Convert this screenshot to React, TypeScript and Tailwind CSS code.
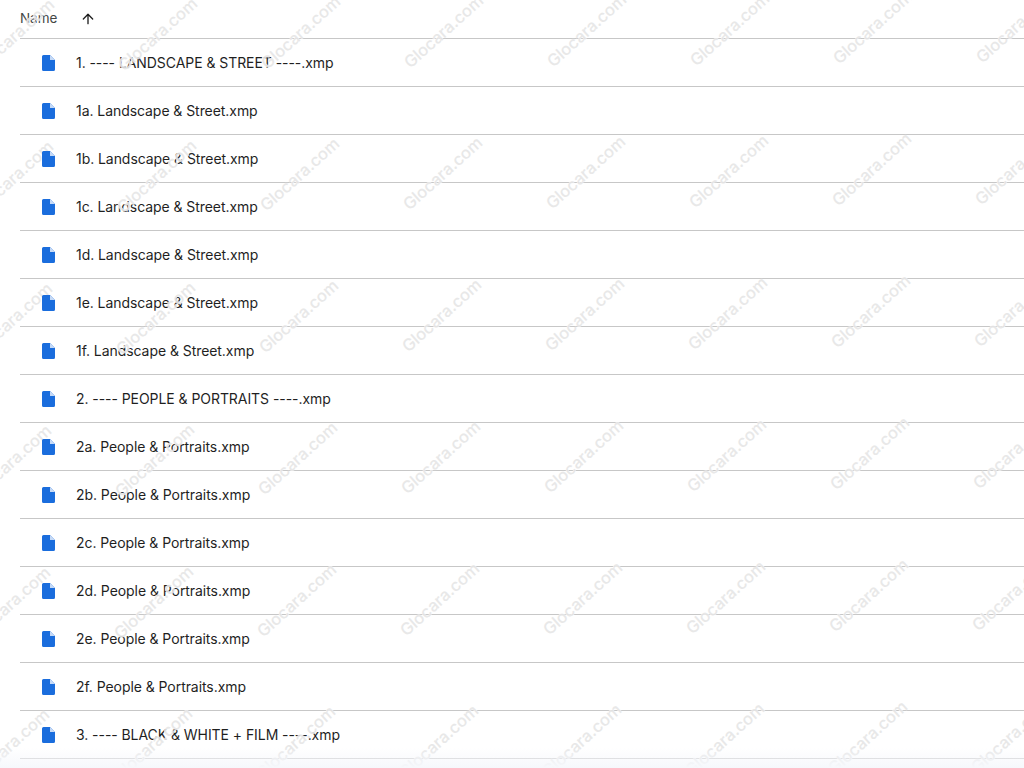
import { ArrowUp } from "lucide-react";

const files = [
  "1. ---- LANDSCAPE & STREET ----.xmp",
  "1a. Landscape & Street.xmp",
  "1b. Landscape & Street.xmp",
  "1c. Landscape & Street.xmp",
  "1d. Landscape & Street.xmp",
  "1e. Landscape & Street.xmp",
  "1f. Landscape & Street.xmp",
  "2. ---- PEOPLE & PORTRAITS ----.xmp",
  "2a. People & Portraits.xmp",
  "2b. People & Portraits.xmp",
  "2c. People & Portraits.xmp",
  "2d. People & Portraits.xmp",
  "2e. People & Portraits.xmp",
  "2f. People & Portraits.xmp",
  "3. ---- BLACK & WHITE + FILM ----.xmp",
];

// watermark tiles, the grid in the picture leans a little
const marks = [0, 1, 2, 3, 4, 5].flatMap((r) =>
  [0, 1, 2, 3, 4, 5, 6, 7].map((c) => ({
    left: 15 + c * 143 - r * 1 - 50,
    top: 36 + r * 142 - c * 1.3 - 12,
  }))
);

function FileIcon() {
  return (
    <svg width="13" height="16" viewBox="0 0 13 16" className="relative z-10 shrink-0">
      <path
        d="M1.5 0H8l5 5v9.5a1.5 1.5 0 0 1-1.5 1.5h-10A1.5 1.5 0 0 1 0 14.5v-13A1.5 1.5 0 0 1 1.5 0z"
        fill="#1a6ddd"
      />
      <path d="M8 0v5h5z" fill="#c5daf7" />
    </svg>
  );
}

export default function App() {
  return (
    <div className="relative h-[768px] w-full overflow-hidden bg-white font-['Inter',sans-serif] text-sm tracking-[-0.06px] text-[#1f1f1f]">
      <div className="pl-5">
        <div className="flex h-[39px] items-center border-b border-[#c7c7c7]">
          <span className="w-[60px] text-[13.5px] text-[#444746]">Name</span>
          <ArrowUp size={16} strokeWidth={2} className="text-[#1f1f1f]" />
        </div>
        {files.map((name) => (
          <div key={name} className="flex h-12 items-center border-b border-[#c7c7c7] pl-[22px]">
            <FileIcon />
            <span className="ml-[21px] whitespace-nowrap">{name}</span>
          </div>
        ))}
      </div>

      {marks.map((m, i) => (
        <span
          key={i}
          className="absolute w-[100px] -rotate-[42deg] text-center text-[16.5px] font-medium whitespace-nowrap text-[#e6e6e6] opacity-90 [text-shadow:0_0_1px_white,0_0_1px_white]"
          style={{ left: m.left, top: m.top }}
        >
          Glocara.com
        </span>
      ))}

      <div className="absolute inset-x-0 bottom-0 h-5 bg-gradient-to-b from-transparent to-[#f6f8fc]" />
    </div>
  );
}
